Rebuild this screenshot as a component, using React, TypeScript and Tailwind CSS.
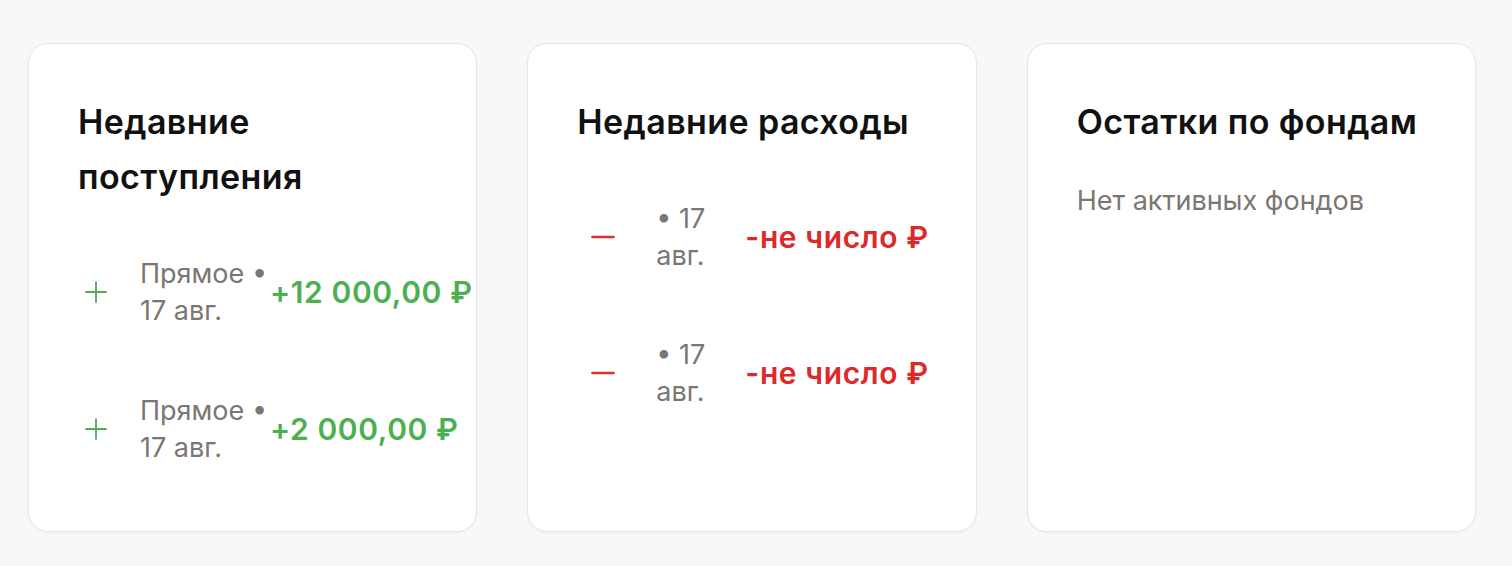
import { Minus, Plus } from 'lucide-react';

interface Entry {
  id: string;
  label: string;
  amount: string;
}

interface RowLayout {
  icon: string;
  text: string;
  amount: string;
}

const incomes: Entry[] = [
  { id: 'i1', label: 'Прямое\u00a0• 17 авг.', amount: '+12 000,00 ₽' },
  { id: 'i2', label: 'Прямое\u00a0• 17 авг.', amount: '+2 000,00 ₽' },
];

const expenses: Entry[] = [
  { id: 'e1', label: ' • 17 авг.', amount: '-не число ₽' },
  { id: 'e2', label: ' • 17 авг.', amount: '-не число ₽' },
];

function Card({ title, children }: { title: string; children: React.ReactNode }) {
  return (
    <div className="h-[489px] rounded-[20px] border border-[#e6e6e6] bg-white px-[49px] pt-[50px] shadow-[0_1px_3px_rgba(0,0,0,0.04)]">
      <h2 className="text-[34px] leading-[55px] font-semibold tracking-[0.4px] text-[#111111]">{title}</h2>
      {children}
    </div>
  );
}

function Row({ entry, income, layout }: { entry: Entry; income: boolean; layout: RowLayout }) {
  return (
    <div className="flex items-center">
      <div className={`flex shrink-0 justify-center ${layout.icon}`}>
        {income ? (
          <Plus className="h-[34px] w-[34px] text-[#4caf50]" strokeWidth={1.3} />
        ) : (
          <Minus className="h-[36px] w-[36px] text-[#e03131]" strokeWidth={1.8} />
        )}
      </div>
      <div className={`shrink-0 text-[27px] leading-[37px] text-[#7b7672] ${layout.text}`}>{entry.label}</div>
      <div
        className={`whitespace-nowrap text-[30px] font-semibold tracking-[0.6px] ${layout.amount} ${
          income ? 'text-[#4caf50]' : 'text-[#dc2a2a]'
        }`}
      >
        {entry.amount}
      </div>
    </div>
  );
}

export default function App() {
  const incomeLayout: RowLayout = { icon: 'w-[35px] mr-[27px]', text: 'w-[127px]', amount: 'ml-[3px]' };
  const expenseLayout: RowLayout = { icon: 'w-[52px] mr-[27px]', text: 'w-[62px]', amount: 'ml-[27px]' };

  return (
    <div className="min-h-[566px] bg-[#f8f8f8] pt-[43px] pl-[28px] pr-[36px]" style={{ fontFamily: 'Inter, "Noto Sans", sans-serif' }}>
      <div className="grid grid-cols-3 gap-[50px]">
        <Card title="Недавние поступления">
          <div className="mt-[51px] flex flex-col gap-[63px]">
            {incomes.map((e) => (
              <Row key={e.id} entry={e} income layout={incomeLayout} />
            ))}
          </div>
        </Card>
        <Card title="Недавние расходы">
          <div className="mt-[51px] flex flex-col gap-[62px]">
            {expenses.map((e) => (
              <Row key={e.id} entry={e} income={false} layout={expenseLayout} />
            ))}
          </div>
        </Card>
        <Card title="Остатки по фондам">
          <p className="mt-[33px] text-[27px] leading-[37px] text-[#7b7672]">Нет активных фондов</p>
        </Card>
      </div>
    </div>
  );
}
